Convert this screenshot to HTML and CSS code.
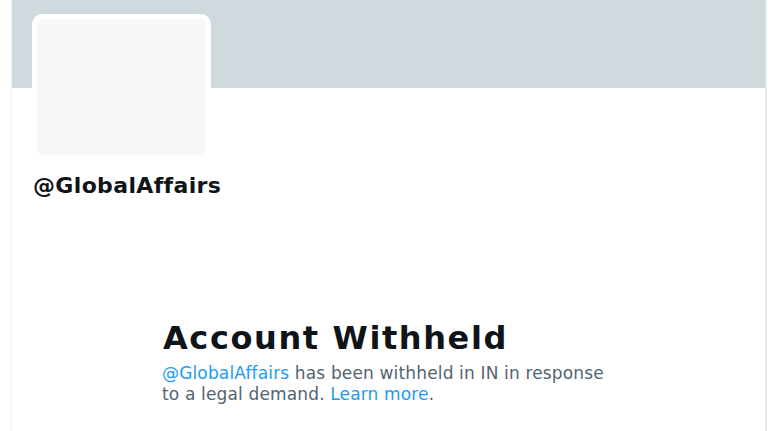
FILE: index.html
```html
<!DOCTYPE html>
<html lang="en">
<head>
<meta charset="utf-8">
<title>@GlobalAffairs</title>
<link rel="stylesheet" href="styles.css">
</head>
<body>
<div class="page">
  <div class="banner"></div>
  <div class="profile">
    <div class="avatar"><div class="avatar-inner"></div></div>
    <div class="handle">@GlobalAffairs</div>
  </div>
  <div class="notice">
    <h1 class="notice-title">Account Withheld</h1>
    <p class="notice-text"><span class="line"><a class="link" href="#">@GlobalAffairs</a> has been withheld in IN in response</span><span class="line">to a legal demand. <a class="link" href="#">Learn more</a>.</span></p>
  </div>
</div>
</body>
</html>
```
FILE: styles.css
```css
html, body {
  margin: 0;
  padding: 0;
  background: #ffffff;
}
body {
  font-family: "DejaVu Sans", "Liberation Sans", sans-serif;
  color: #0f1419;
  overflow: hidden;
}
.page {
  margin-left: 11px;
  width: 753px;
  height: 431px;
  border-left: 1px solid #eff3f4;
  border-right: 2px solid #e6ebed;
  box-sizing: content-box;
}
.banner {
  height: 88px;
  background: #cfd9de;
}
.profile {
  padding-left: 20px;
  margin-top: -74px;
}
.avatar {
  width: 169px;
  height: 136px;
  border: 5px solid #ffffff;
  border-radius: 10px;
  background: #ffffff;
}
.avatar-inner {
  width: 100%;
  height: 100%;
  background: #f7f9f9;
  border-radius: 6px;
}
.handle {
  margin-top: 13px;
  margin-left: 1px;
  font-size: 22px;
  line-height: 26px;
  font-weight: bold;
  letter-spacing: 0.35px;
}
.notice {
  padding-left: 150px;
  padding-top: 120px;
}
.notice-title {
  margin: 0;
  font-size: 32px;
  line-height: 38px;
  font-weight: bold;
  letter-spacing: 1.6px;
  margin-left: 1px;
}
.notice-text {
  margin: 6px 0 0 0;
  width: 450px;
  font-size: 17px;
  line-height: 21px;
  letter-spacing: 0.15px;
  color: #536471;
}
.line {
  display: block;
}
.link {
  color: #1d9bf0;
  text-decoration: none;
}
```
